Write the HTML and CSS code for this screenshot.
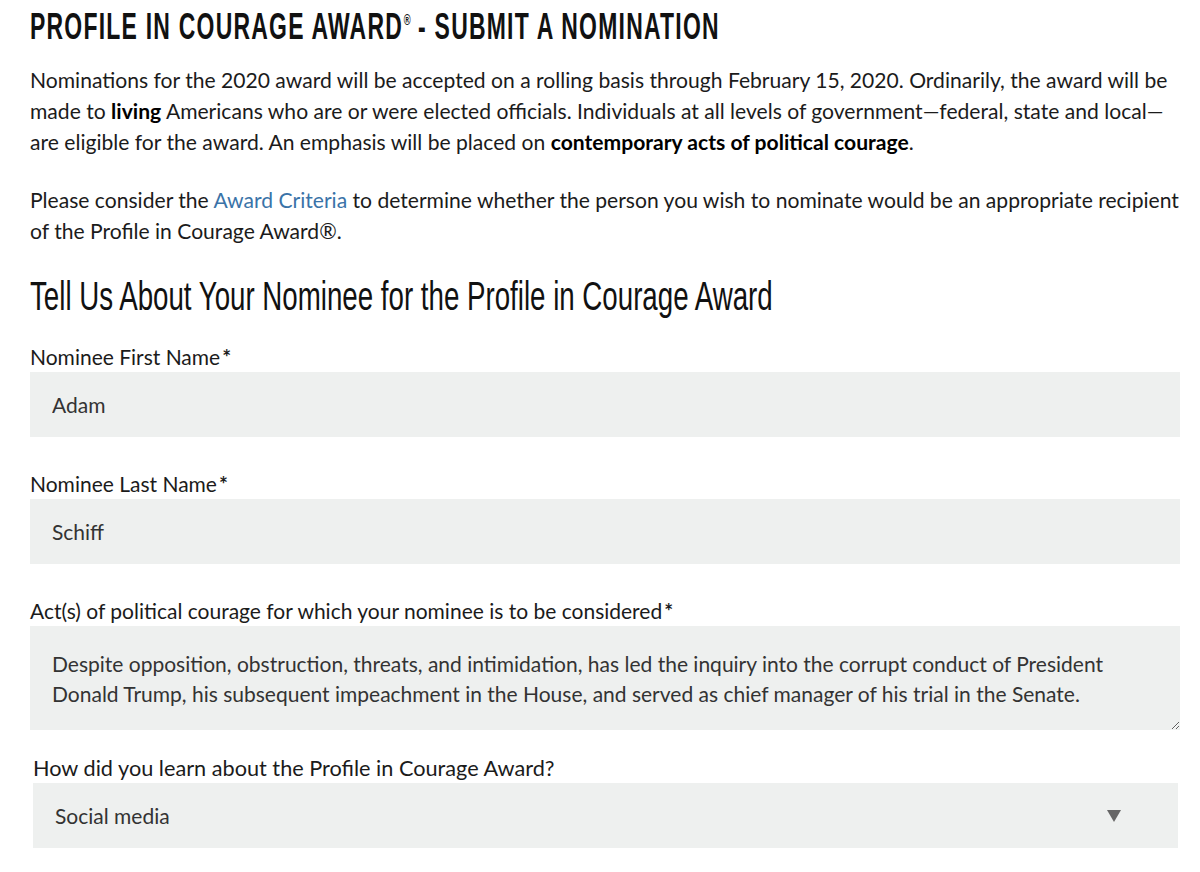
FILE: index.html
```html
<!DOCTYPE html>
<html lang="en">
<head>
<meta charset="utf-8">
<title>Profile in Courage Award - Submit a Nomination</title>
<link rel="stylesheet" href="styles.css">
</head>
<body>
<main class="page">
  <h1 class="page-title"><span class="cond">PROFILE IN COURAGE AWARD<sup class="reg">®</sup> - SUBMIT A NOMINATION</span></h1>
  <p class="intro">Nominations for the 2020 award will be accepted on a rolling basis through February 15, 2020. Ordinarily, the award will be made to <strong>living</strong> Americans who are or were elected officials. Individuals at all levels of government—federal, state and local—are eligible for the award. An emphasis will be placed on <strong>contemporary acts of political courage</strong>.</p>
  <p class="intro">Please consider the <a class="link" href="#">Award Criteria</a> to determine whether the person you wish to nominate would be an appropriate recipient of the Profile in Courage Award®.</p>
  <h2 class="section-title"><span class="cond-light">Tell Us About Your Nominee for the Profile in Courage Award</span></h2>
  <form class="form">
    <div class="field">
      <label class="label" for="first">Nominee First Name<span class="req">*</span></label>
      <input class="control" id="first" type="text" value="Adam">
    </div>
    <div class="field">
      <label class="label" for="last">Nominee Last Name<span class="req">*</span></label>
      <input class="control" id="last" type="text" value="Schiff">
    </div>
    <div class="field">
      <label class="label" for="acts">Act(s) of political courage for which your nominee is to be considered<span class="req">*</span></label>
      <textarea class="control area" id="acts">Despite opposition, obstruction, threats, and intimidation, has led the inquiry into the corrupt conduct of President Donald Trump, his subsequent impeachment in the House, and served as chief manager of his trial in the Senate.</textarea>
    </div>
    <div class="field field-select">
      <label class="label label-lg" for="learn">How did you learn about the Profile in Courage Award?</label>
      <div class="select-wrap">
        <select class="control select" id="learn">
          <option>Social media</option>
        </select>
        <svg class="caret" width="14" height="12" viewBox="0 0 14 12" aria-hidden="true"><path d="M0 0H14L7 12Z" fill="#666"/></svg>
      </div>
    </div>
  </form>
</main>
</body>
</html>
```
FILE: styles.css
```css
html, body {
  margin: 0;
  padding: 0;
  background: #fff;
}
body {
  font-family: Lato, "Open Sans", sans-serif;
  color: #1b1b1b;
  overflow: hidden;
}
.page {
  padding: 0 20px 0 30px;
}
.page-title {
  margin: 0;
  padding-top: 9px;
  height: 38px;
  font-family: "Liberation Sans Narrow", "Liberation Sans", sans-serif;
  font-weight: 700;
  font-size: 37px;
  line-height: 36px;
  letter-spacing: 2px;
  white-space: nowrap;
  color: #111;
}
.cond {
  display: inline-block;
  transform-origin: left center;
  transform: scaleX(0.62);
}
.reg {
  font-size: 15px;
  vertical-align: top;
  line-height: 1;
  position: relative;
  top: 3px;
  margin-left: 1px;
  letter-spacing: 0;
}
.intro {
  margin: 17px 0 0;
  font-size: 21.1px;
  line-height: 31px;
}
.intro + .intro {
  margin-top: 27px;
}
.intro strong {
  font-weight: 700;
  color: #000;
}
.link {
  color: #3a73a8;
  text-decoration: none;
}
.section-title {
  margin: 26px 0 0;
  font-family: "Liberation Sans Narrow", "Liberation Sans", sans-serif;
  font-weight: 400;
  font-size: 40px;
  line-height: 48px;
  white-space: nowrap;
  color: #111;
}
.cond-light {
  display: inline-block;
  transform-origin: left center;
  transform: scaleX(0.692);
}
.form {
  margin-top: 23px;
}
.field {
  margin-bottom: 33px;
}
.label {
  display: block;
  font-size: 21px;
  line-height: 28px;
  margin-bottom: 1px;
  color: #1b1b1b;
}
.label-lg {
  font-size: 21.7px;
}
.req {
  font-weight: 700;
  margin-left: 2px;
}
.control {
  display: block;
  box-sizing: border-box;
  width: 100%;
  height: 65px;
  margin: 0;
  border: 0;
  border-radius: 0;
  background: #eef0ef;
  padding: 0 22px;
  font-family: Lato, "Open Sans", sans-serif;
  font-size: 21px;
  color: #333;
  outline: none;
}
.area {
  height: 104px;
  padding: 23px 22px 0;
  line-height: 30px;
  resize: vertical;
}
.field-select {
  padding-left: 3px;
  padding-right: 2px;
  margin-top: -9px;
}
.select-wrap {
  position: relative;
}
.select {
  appearance: none;
  -webkit-appearance: none;
  padding-left: 22px;
}
.caret {
  position: absolute;
  right: 57px;
  top: 27px;
  pointer-events: none;
}
```
